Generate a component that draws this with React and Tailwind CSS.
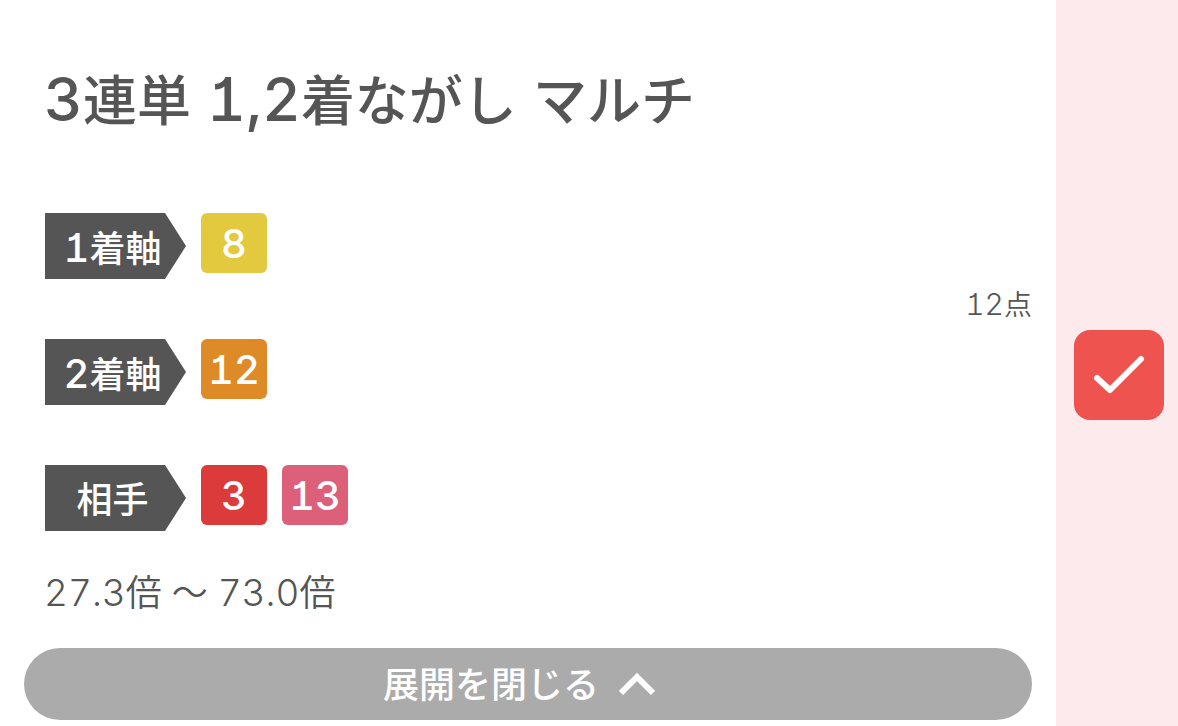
import React, { useState } from 'react';

const ROWS = [
  { label: '1着軸', horses: [{ no: 8, color: 'bg-[#e3c93d]' }] },
  { label: '2着軸', horses: [{ no: 12, color: 'bg-[#dd8a27]' }] },
  { label: '相手', horses: [{ no: 3, color: 'bg-[#db3b3b]' }, { no: 13, color: 'bg-[#dc6079]' }] },
];

// Digits, latin punctuation and spaces are set slightly larger than the kana and kanji
const Mixed = ({ text, latin }) =>
  text.split(/([\x20-\x7e]+)/).filter(Boolean).map((part, i) =>
    /^[\x20-\x7e]/.test(part) ? <span key={i} className={latin}>{part}</span> : part
  );

const ArrowLabel = ({ text }) => (
  <div className="relative w-[141px] h-[66px] shrink-0">
    <svg className="absolute inset-0 w-full h-full" viewBox="0 0 141 66" fill="#555" aria-hidden="true">
      <path d="M0 0H120L141 33L120 66H0Z" />
    </svg>
    <div className="relative flex h-full w-[135px] items-center justify-center pt-1">
      <span className="text-4xl font-medium text-white">
        <Mixed text={text} latin="text-[40px] leading-none" />
      </span>
    </div>
  </div>
);

const App = () => {
  const [checked, setChecked] = useState(true);
  const [open, setOpen] = useState(true);

  return (
    <main className="flex min-h-screen bg-white font-[Inter,'Noto_Sans_CJK_JP',sans-serif] [font-feature-settings:'tnum','cv01','ss03'] [font-optical-sizing:none] text-[#555]">
      <div className="flex flex-1 flex-col px-6 pb-[6px]">
        {/* Bet type */}
        <h1 className="mt-[66px] pl-[20px] text-[54px] leading-[72px] font-medium whitespace-nowrap">
          <Mixed text="3連単 1,2着ながし マルチ" latin="text-[60px] leading-none" />
        </h1>

        {/* Selections */}
        <div className="mt-[75px] flex items-start justify-between pl-[21px]">
          <div className="flex flex-col gap-[60px]">
            {ROWS.map((row) => (
              <div key={row.label} className="flex items-start gap-[15px]">
                <ArrowLabel text={row.label} />
                {row.horses.map((horse) => (
                  <span key={horse.no} className={`flex h-[60px] w-[66px] items-center justify-center rounded-md pt-0.5 text-[40px] font-medium text-white ${horse.color}`}>
                    {horse.no}
                  </span>
                ))}
              </div>
            ))}
          </div>
          <p className="mt-[72px] text-[28px] leading-10 font-[350]">
            <Mixed text="12点" latin="text-[30px] leading-none font-light" />
          </p>
        </div>

        {/* Odds range */}
        <p className="mt-9 pl-[20px] text-4xl leading-[52px] font-[350]">
          <Mixed text="27.3倍 〜 73.0倍" latin="text-[37px] leading-none font-light" />
        </p>

        <button
          type="button"
          onClick={() => setOpen(!open)}
          className="mt-[29px] flex h-[72px] items-center justify-center gap-5 rounded-full bg-[#ababab] pr-[18px] text-4xl font-medium text-white"
        >
          <span className="pt-0.5">展開を閉じる</span>
          <svg className="h-6 w-9" viewBox="0 0 36 24" fill="none" stroke="currentColor" strokeWidth="6" aria-hidden="true">
            <path d="M2 21L18 5L34 21" />
          </svg>
        </button>
      </div>

      {/* Select this bet */}
      <label className="flex w-[122px] shrink-0 items-center justify-center bg-[#fdeaec] pt-6 pl-1">
        <span className="relative block size-[90px]">
          <input
            type="checkbox"
            aria-label="選択"
            checked={checked}
            onChange={() => setChecked(!checked)}
            className="size-full appearance-none rounded-2xl border-2 border-[#ee5350] bg-white checked:bg-[#ee5350]"
          />
          <svg className="pointer-events-none absolute inset-0" viewBox="0 0 90 90" fill="none" stroke="#fff" strokeWidth="6" strokeLinecap="round" strokeLinejoin="round" aria-hidden="true">
            <path d="M23 48L36 60L67 29" />
          </svg>
        </span>
      </label>
    </main>
  );
};

export default App;
